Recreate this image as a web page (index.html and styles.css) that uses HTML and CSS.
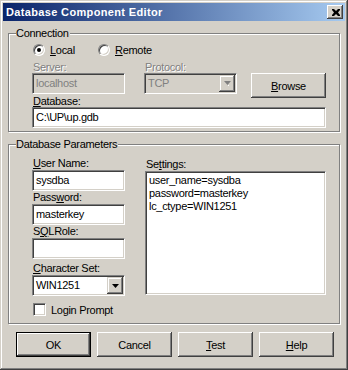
FILE: index.html
```html
<!DOCTYPE html>
<html lang="en">
<head>
    <meta charset="UTF-8">
    <title>Database Component Editor</title>
    <link rel="stylesheet" href="styles.css">
</head>
<body>
    <div class="window">
        <div class="titlebar">
            <span class="title">Database Component Editor</span>
            <div class="close-btn">
                <svg width="8" height="7" viewBox="0 0 8 7">
                    <path d="M0 0h2l2 2 2-2h2v1l-2 2.5 2 2.5v1h-2l-2-2-2 2h-2v-1l2-2.5-2-2.5z" fill="#000"/>
                </svg>
            </div>
        </div>

        <div class="group group-conn">
            <span class="group-title">Connection</span>
            <div class="radios">
                <div class="radio"><span class="radio-box checked"></span><span><u>L</u>ocal</span></div>
                <div class="radio"><span class="radio-box"></span><span><u>R</u>emote</span></div>
            </div>
            <div class="conn-row">
                <div class="field field-small">
                    <div class="label disabled">Server:</div>
                    <div class="edit edit-disabled">localhost</div>
                </div>
                <div class="field field-small field-protocol">
                    <div class="label disabled">Protocol:</div>
                    <div class="combo edit-disabled">
                        <span class="combo-text">TCP</span>
                        <span class="drop-btn">
                            <svg width="7" height="5" viewBox="0 0 7 5"><path d="M0 0h7l-3.5 4z" fill="#808080"/><path d="M4 4h1v1h-1z" fill="#fff"/></svg>
                        </span>
                    </div>
                </div>
                <div class="btn btn-browse"><span><u>B</u>rowse</span></div>
            </div>
            <div class="field field-db">
                <div class="label"><u>D</u>atabase:</div>
                <div class="edit">C:\UP\up.gdb</div>
            </div>
        </div>

        <div class="group group-params">
            <span class="group-title">Database Parameters</span>
            <div class="params">
                <div class="params-left">
                    <div class="field">
                        <div class="label label-tall"><u>U</u>ser Name:</div>
                        <div class="edit">sysdba</div>
                    </div>
                    <div class="field">
                        <div class="label label-tall">Pass<u>w</u>ord:</div>
                        <div class="edit">masterkey</div>
                    </div>
                    <div class="field">
                        <div class="label label-tall">S<u>Q</u>LRole:</div>
                        <div class="edit"></div>
                    </div>
                    <div class="field field-charset">
                        <div class="label label-tall"><u>C</u>haracter Set:</div>
                        <div class="combo">
                            <span class="combo-text">WIN1251</span>
                            <span class="drop-btn">
                                <svg width="7" height="4" viewBox="0 0 7 4"><path d="M0 0h7l-3.5 4z" fill="#000"/></svg>
                            </span>
                        </div>
                    </div>
                    <div class="check">
                        <span class="check-box"></span>
                        <span>Login Prompt</span>
                    </div>
                </div>
                <div class="params-right">
                    <div class="label label-settings">Se<u>t</u>tings:</div>
                    <div class="memo">user_name=sysdba<br>password=masterkey<br>lc_ctype=WIN1251</div>
                </div>
            </div>
        </div>

        <div class="buttons">
            <div class="btn btn-default"><span>OK</span></div>
            <div class="btn"><span>Cancel</span></div>
            <div class="btn"><span><u>T</u>est</span></div>
            <div class="btn"><span><u>H</u>elp</span></div>
        </div>
    </div>
</body>
</html>
```

FILE: styles.css
```css
body {
    margin: 0;
    background: #d4d0c8;
    font-family: 'Liberation Sans', Arial, sans-serif;
    font-size: 11px;
    letter-spacing: -0.3px;
    color: #000;
}

.window {
    width: 348px;
    height: 370px;
    box-sizing: border-box;
    padding: 3px;
    background: #d4d0c8;
    box-shadow: inset -1px -1px #404040, inset 1px 1px #d4d0c8,
                inset -2px -2px #808080, inset 2px 2px #fff;
}

.titlebar {
    height: 18px;
    display: flex;
    align-items: center;
    justify-content: space-between;
    padding: 0 2px 0 3px;
    background: linear-gradient(90deg, #0a246a, #a6caf0);
}

.title {
    color: #fff;
    font-weight: bold;
    letter-spacing: 0.35px;
}

.close-btn {
    width: 16px;
    height: 14px;
    box-sizing: border-box;
    display: flex;
    align-items: center;
    justify-content: center;
    padding-left: 1px;
    background: #d4d0c8;
    box-shadow: inset -1px -1px #404040, inset 1px 1px #fff, inset -2px -2px #808080;
}

/* group boxes */
.group {
    position: relative;
    margin-left: 5px;
    width: 332px;
    box-sizing: border-box;
    border: 1px solid #808080;
    box-shadow: inset 1px 1px #fff, 1px 1px #fff;
    padding-left: 23px;
}

.group-title {
    position: absolute;
    top: -7px;
    left: 7px;
    padding: 0 1px 0 0;
    line-height: 13px;
    background: #d4d0c8;
}

.group-conn {
    margin-top: 12px;
    height: 99px;
}

.group-params {
    margin-top: 12px;
    height: 180px;
}

/* labels and edits */
.label {
    height: 11px;
    line-height: 11px;
    padding-left: 1px;
    white-space: nowrap;
}

.label-tall {
    height: 13px;
    line-height: 13px;
}

.disabled {
    color: #808080;
    text-shadow: 1px 1px #fff;
}

.edit, .combo, .memo {
    box-sizing: border-box;
    height: 21px;
    background: #fff;
    border: 1px solid;
    border-color: #808080 #fff #fff #808080;
    box-shadow: inset 1px 1px #404040, inset -1px -1px #d4d0c8;
    padding: 0 3px;
    line-height: 19px;
    white-space: nowrap;
}

.edit-disabled {
    background: #d4d0c8;
    color: #808080;
}

.combo {
    display: flex;
    justify-content: space-between;
    padding: 1px 1px 1px 3px;
    line-height: 17px;
}

.drop-btn {
    width: 16px;
    height: 17px;
    box-sizing: border-box;
    display: flex;
    align-items: center;
    justify-content: center;
    background: #d4d0c8;
    box-shadow: inset -1px -1px #404040, inset 1px 1px #d4d0c8,
                inset -2px -2px #808080, inset 2px 2px #fff;
}

/* connection */
.radios {
    display: flex;
    margin-top: 9px;
    margin-left: 1px;
    height: 14px;
}

.radio {
    display: flex;
    align-items: center;
    gap: 5px;
    width: 65px;
}

.radio-box {
    position: relative;
    width: 12px;
    height: 12px;
    box-sizing: border-box;
    border-radius: 50%;
    background: #fff;
    border: 1px solid;
    border-color: #808080 #fff #fff #808080;
    box-shadow: inset 1px 1px #404040, inset -1px -1px #d4d0c8;
}

.radio-box.checked::after {
    content: "";
    position: absolute;
    left: 3px;
    top: 3px;
    width: 4px;
    height: 4px;
    border-radius: 50%;
    background: #000;
}

.conn-row {
    display: flex;
    align-items: flex-start;
    height: 32px;
    margin-top: 5px;
}

.field-small {
    width: 93px;
}

.field-protocol {
    margin-left: 19px;
}

.btn-browse {
    margin-top: 11px;
    margin-left: 14px;
}

.field-db {
    margin-top: 2px;
    width: 294px;
}

/* parameters */
.params {
    display: flex;
    margin-top: 12px;
}

.params-left {
    width: 93px;
}

.field-charset {
    margin-top: 3px;
}

.params-right {
    margin-left: 20px;
    width: 181px;
}

.label-settings {
    height: 14px;
    line-height: 15px;
}

.memo {
    height: 124px;
    padding: 2px 3px;
    line-height: 13px;
}

.check {
    display: flex;
    align-items: center;
    gap: 5px;
    margin-top: 7px;
    margin-left: 1px;
}

.check-box {
    width: 13px;
    height: 13px;
    box-sizing: border-box;
    background: #fff;
    border: 1px solid;
    border-color: #808080 #fff #fff #808080;
    box-shadow: inset 1px 1px #404040, inset -1px -1px #d4d0c8;
}

/* buttons */
.btn {
    width: 75px;
    height: 25px;
    box-sizing: border-box;
    display: flex;
    align-items: center;
    justify-content: center;
    background: #d4d0c8;
    box-shadow: inset -1px -1px #404040, inset 1px 1px #fff, inset -2px -2px #808080;
}

.btn-default {
    border: 1px solid #000;
}

.buttons {
    display: flex;
    gap: 6px;
    margin-top: 8px;
    margin-left: 13px;
}
```
